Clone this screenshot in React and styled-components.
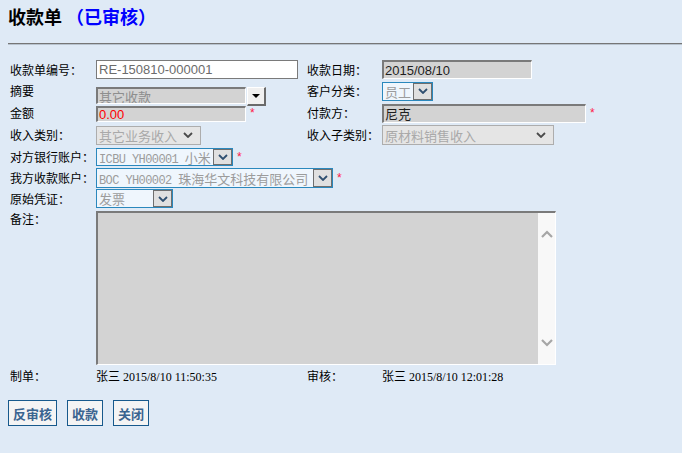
import React from 'react'
import styled, { createGlobalStyle } from 'styled-components'

const GlobalStyle = createGlobalStyle`
	html, body {
		margin: 0;
		padding: 0;
		background: #dfeaf6;
	}
	body {
		font-family: "Liberation Sans", "Noto Sans CJK SC", sans-serif;
		font-size: 12px;
		color: #000;
	}
`

const Chevron = ({ color = '#2f4f70' }) => (
	<svg width="10" height="6" viewBox="0 0 10 6">
		<polyline points="1,1 5,5 9,1" fill="none" stroke={color} strokeWidth="1.8" />
	</svg>
)

const Triangle = () => (
	<svg width="8" height="4" viewBox="0 0 8 4">
		<polygon points="0,0 8,0 4,4" fill="#000" />
	</svg>
)

const ScrollChevron = ({ up }) => (
	<svg width="12" height="8" viewBox="0 0 12 8">
		<polyline
			points={up ? '1,7 6,2 11,7' : '1,1 6,6 11,1'}
			fill="none"
			stroke="#a6a6a6"
			strokeWidth="2.2"
		/>
	</svg>
)

export default function App() {
	return (
		<Page>
			<GlobalStyle />
			<Title>
				收款单 <Status>（已审核）</Status>
			</Title>
			<Rule />

			<Form>
				<Label>收款单编号：</Label>
				<Cell>
					<TextInput readOnly value="RE-150810-000001" $w={202} />
				</Cell>
				<Label $right>收款日期：</Label>
				<Cell>
					<GrayInput readOnly value="2015/08/10" $w={150} $h={19} />
				</Cell>

				<Label>摘要</Label>
				<Cell $top={7}>
					<GrayInput readOnly value="其它收款" $w={150} $h={17} $color="#8e8e8e" />
					<DropButton>
						<Triangle />
					</DropButton>
				</Cell>
				<Label $right>客户分类：</Label>
				<Cell>
					<Select $w={51} $h={19}>
						<SelectText>员工</SelectText>
						<SelectArrow>
							<Chevron />
						</SelectArrow>
					</Select>
				</Cell>

				<Label>金额</Label>
				<Cell $top={4}>
					<GrayInput readOnly value="0.00" $w={150} $h={16} $color="#ff0000" />
					<Required>*</Required>
				</Cell>
				<Label $right>付款方：</Label>
				<Cell>
					<GrayInput readOnly value="尼克" $w={204} $h={19} />
					<Required>*</Required>
				</Cell>

				<Label>收入类别：</Label>
				<Cell>
					<DisabledSelect $w={105} $h={19}>
						<SelectText $disabled>其它业务收入</SelectText>
						<Chevron color="#4a4a4a" />
					</DisabledSelect>
				</Cell>
				<Label $right>收入子类别：</Label>
				<Cell>
					<DisabledSelect $w={172} $h={20}>
						<SelectText $disabled>原材料销售收入</SelectText>
						<Chevron color="#4a4a4a" />
					</DisabledSelect>
				</Cell>

				<Label>对方银行账户：</Label>
				<Cell $span>
					<Select $w={137} $h={18}>
						<SelectText>
							<span>
								<Mono>ICBU YH00001 </Mono>小米
							</span>
						</SelectText>
						<SelectArrow>
							<Chevron />
						</SelectArrow>
					</Select>
					<Required>*</Required>
				</Cell>

				<Label>我方收款账户：</Label>
				<Cell $span>
					<Select $w={237} $h={20}>
						<SelectText>
							<span>
								<Mono>BOC YH00002 </Mono>珠海华文科技有限公司
							</span>
						</SelectText>
						<SelectArrow>
							<Chevron />
						</SelectArrow>
					</Select>
					<Required>*</Required>
				</Cell>

				<Label>原始凭证：</Label>
				<Cell $span>
					<Select $w={77} $h={19}>
						<SelectText>发票</SelectText>
						<SelectArrow>
							<Chevron />
						</SelectArrow>
					</Select>
				</Cell>

				<Label $alignTop>备注：</Label>
				<Cell $span $alignTop>
					<Memo>
						<MemoArea />
						<ScrollRail>
							<ScrollChevron up />
							<ScrollChevron />
						</ScrollRail>
					</Memo>
				</Cell>

				<Label>制单：</Label>
				<Value>张三 2015/8/10 11:50:35</Value>
				<Label $right>审核：</Label>
				<Value>张三 2015/8/10 12:01:28</Value>
			</Form>

			<Actions>
				<ActionButton>反审核</ActionButton>
				<ActionButton>收款</ActionButton>
				<ActionButton>关闭</ActionButton>
			</Actions>
		</Page>
	)
}

const Page = styled.div`
	width: 682px;
	height: 453px;
	padding-left: 8px;
	box-sizing: border-box;
	background: #dfeaf6;
	overflow: hidden;
`

const Title = styled.h1`
	margin: 7px 0 0;
	height: 18px;
	font-size: 18px;
	line-height: 18px;
	font-weight: bold;
	font-family: "Noto Sans CJK SC", sans-serif;
	color: #000;
	white-space: nowrap;
`

const Status = styled.span`
	color: #0000ff;
`

const Rule = styled.div`
	margin-top: 18px;
	border-top: 1px solid #767676;
	border-bottom: 1px solid #b8c3ce;
`

const Form = styled.div`
	display: grid;
	grid-template-columns: 88px 211px 75px 1fr;
	grid-template-rows: 21px 22px 22px 22px 22px 20px 21px 158px 18px;
	align-items: center;
	margin-top: 14px;
`

const Label = styled.div`
	padding-left: ${props => (props.$right ? '0' : '2px')};
	padding-top: ${props => (props.$alignTop ? '3px' : '0')};
	align-self: ${props => (props.$alignTop ? 'start' : 'center')};
	font-family: "Noto Sans CJK SC", sans-serif;
	font-size: 12px;
	line-height: 14px;
	white-space: nowrap;
`

const Cell = styled.div`
	display: flex;
	align-items: ${props => (props.$top ? 'flex-start' : 'center')};
	align-self: ${props => (props.$top || props.$alignTop ? 'start' : 'center')};
	margin-top: ${props => (props.$top ? `${props.$top}px` : props.$alignTop ? '2px' : '0')};
	grid-column: ${props => (props.$span ? '2 / -1' : 'auto')};
	height: ${props => (props.$top ? '19px' : 'auto')};
`

const TextInput = styled.input`
	box-sizing: border-box;
	width: ${props => props.$w}px;
	height: 19px;
	margin: 0;
	padding: 0 2px;
	background: #fff;
	border: 1px solid #7a7a7a;
	outline: none;
	font-family: "Liberation Sans", "Noto Sans CJK SC", sans-serif;
	font-size: 13px;
	color: #6b6b6b;
`

const GrayInput = styled.input`
	box-sizing: border-box;
	width: ${props => props.$w}px;
	height: ${props => props.$h}px;
	margin: 0;
	padding: 0 1px;
	background: #d3d3d3;
	border-style: solid;
	border-width: 2px 1px 1px 2px;
	border-color: #7a7a7a #fff #fff #7a7a7a;
	outline: none;
	font-family: "Liberation Sans", "Noto Sans CJK SC", sans-serif;
	font-size: 13px;
	color: ${props => props.$color || '#1e1e1e'};
`

const DropButton = styled.span`
	box-sizing: border-box;
	width: 19px;
	height: 19px;
	margin-left: 1px;
	display: flex;
	align-items: center;
	justify-content: center;
	background: #f0f0f0;
	border-style: solid;
	border-width: 1px 2px 2px 1px;
	border-color: #fff #6a6a6a #6a6a6a #fff;
`

const Select = styled.div`
	box-sizing: border-box;
	width: ${props => props.$w}px;
	height: ${props => props.$h}px;
	display: flex;
	align-items: stretch;
	background: #eff6fd;
	border: 1px solid #2a88bd;
`

const SelectText = styled.span`
	flex: 1;
	min-width: 0;
	padding-left: 2px;
	display: flex;
	align-items: center;
	overflow: hidden;
	white-space: nowrap;
	font-family: "Noto Sans CJK SC", sans-serif;
	font-size: 13px;
	color: ${props => (props.$disabled ? '#a9a9a9' : '#9c9c9c')};
`

const Mono = styled.span`
	font-family: "Liberation Mono", monospace;
	font-size: 12px;
	letter-spacing: -0.6px;
	white-space: pre;
`

const SelectArrow = styled.span`
	box-sizing: border-box;
	width: 19px;
	flex: none;
	display: flex;
	align-items: center;
	justify-content: center;
	background: #e0e0e0;
	border: 1px solid #6e6e6e;
`

const DisabledSelect = styled.div`
	box-sizing: border-box;
	width: ${props => props.$w}px;
	height: ${props => props.$h}px;
	display: flex;
	align-items: center;
	padding-right: 7px;
	background: #e5e5e5;
	border: 1px solid #adadad;
`

const Required = styled.span`
	margin-left: 4px;
	font-family: "Liberation Sans", sans-serif;
	font-size: 12px;
	color: #ff1a4a;
`

const Memo = styled.div`
	box-sizing: border-box;
	width: 460px;
	height: 154px;
	display: flex;
	background: #d3d3d3;
	border-style: solid;
	border-width: 2px 1px 1px 2px;
	border-color: #7a7a7a #fff #fff #7a7a7a;
`

const MemoArea = styled.div`
	flex: 1;
`

const ScrollRail = styled.div`
	width: 17px;
	box-sizing: border-box;
	padding: 17px 0 17px;
	display: flex;
	flex-direction: column;
	justify-content: space-between;
	align-items: center;
	background: #f8f8f8;
`

const Value = styled.div`
	font-family: "Liberation Serif", "Noto Sans CJK SC", serif;
	font-size: 12px;
	white-space: nowrap;
`

const Actions = styled.div`
	display: flex;
	gap: 10px;
	margin-top: 15px;
`

const ActionButton = styled.button`
	height: 26px;
	margin: 0;
	padding: 0 4px;
	background: #f4f4f4;
	border: 1px solid #17598c;
	font-family: "Noto Sans CJK SC", sans-serif;
	font-size: 13px;
	font-weight: bold;
	color: #3a6490;
	cursor: pointer;
`
